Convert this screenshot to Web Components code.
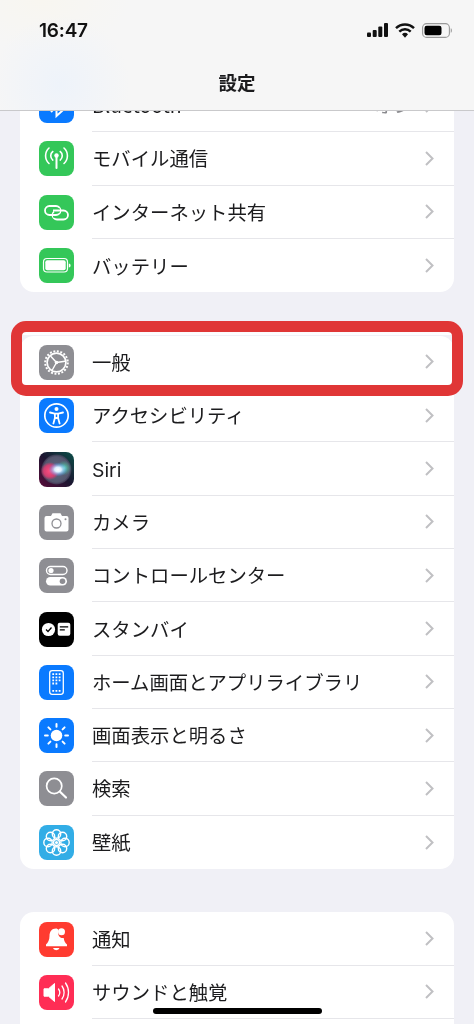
<!DOCTYPE html>
<html lang="ja">
<head>
<meta charset="utf-8">
<title>設定</title>
<style>
html,body{margin:0;padding:0;background:#f0f0f6;overflow:hidden;}
</style>
</head>
<body>
<settings-app>
  <status-bar slot="header"></status-bar>
  <nav-title slot="header">設定</nav-title>

  <settings-group class="first">
    <settings-row value="オン">Bluetooth
      <svg slot="icon" viewBox="0 0 35 35"><rect width="35" height="35" rx="8" fill="#0a7aff"/><path d="M12 11l11 12-5.500 5V7l5.500 5-11 12" fill="none" stroke="#fff" stroke-width="2"/></svg>
    </settings-row>
    <settings-row>モバイル通信
      <svg slot="icon" viewBox="0 0 35 35"><rect width="35" height="35" rx="8" fill="#34c759"/><g fill="none" stroke="#fff" stroke-width="1.600" stroke-linecap="round"><path d="M17.500 16v11" stroke-width="2"/><path d="M13.800 10.500a5.500 5.500 0 0 0 0 8.600M21.200 10.500a5.500 5.500 0 0 1 0 8.600"/><path d="M10 7a10.500 10.500 0 0 0 0 15.500M25 7a10.500 10.500 0 0 1 0 15.500"/></g><circle cx="17.500" cy="14.500" r="2.200" fill="#fff"/></svg>
    </settings-row>
    <settings-row>インターネット共有
      <svg slot="icon" viewBox="0 0 35 35"><rect width="35" height="35" rx="8" fill="#34c759"/><g fill="none" stroke-width="1.800"><rect x="13.500" y="15.500" width="15.500" height="9" rx="4.500" stroke="#fff"/><path d="M14 20.500h6" stroke="#34c759" stroke-width="3.800"/><rect x="6" y="11" width="15.500" height="9" rx="4.500" stroke="#fff"/><path d="M15 15.500h6" stroke="#34c759" stroke-width="3.800"/><path d="M14 15.500h8" stroke="#fff"/></g></svg>
    </settings-row>
    <settings-row last>バッテリー
      <svg slot="icon" viewBox="0 0 35 35"><rect width="35" height="35" rx="8" fill="#34c759"/><rect x="4.500" y="10.500" width="24" height="13.500" rx="3.500" fill="none" stroke="#fff" stroke-width="1.200"/><rect x="6.300" y="12.300" width="20.400" height="9.900" rx="2" fill="#fff"/><path d="M29.800 15.500c1.300.3 1.800 1 1.800 2s-.5 1.700-1.800 2z" fill="#fff"/></svg>
    </settings-row>
  </settings-group>

  <settings-group>
    <settings-row>一般
      <svg slot="icon" viewBox="0 0 35 35"><rect width="35" height="35" rx="8" fill="#8e8e93"/><g fill="none" stroke="#fff"><circle cx="17.500" cy="17.500" r="11.300" stroke-width="2" stroke-dasharray="1.970 1.580"/><circle cx="17.500" cy="17.500" r="9.400" stroke-width="1.700"/><path d="M17.500 17.500L11.500 11M17.500 17.500L26 16.300M17.500 17.500L13 25.500" stroke-width="1.400"/></g><circle cx="17.500" cy="17.500" r="1.800" fill="#fff"/></svg>
    </settings-row>
    <settings-row>アクセシビリティ
      <svg slot="icon" viewBox="0 0 35 35"><rect width="35" height="35" rx="8" fill="#0a7aff"/><circle cx="17.500" cy="17.500" r="11.700" fill="none" stroke="#fff" stroke-width="1.700"/><circle cx="17.500" cy="11" r="2" fill="#fff"/><path d="M11 14.500l4.700 1.100h3.600l4.700-1.100M15.900 15.700v4.300l-1.500 5.500M19.100 15.700v4.300l1.500 5.500M15.900 20h3.200" fill="none" stroke="#fff" stroke-width="1.800" stroke-linecap="round" stroke-linejoin="round"/></svg>
    </settings-row>
    <settings-row><span class="latin">Siri</span>
      <svg slot="icon" viewBox="0 0 35 35"><defs><linearGradient id="sb" x1="0" y1="1" x2="1" y2="0"><stop offset="0" stop-color="#5a0c3a"/><stop offset=".5" stop-color="#1b1530"/><stop offset="1" stop-color="#0b4f48"/></linearGradient><radialGradient id="so"><stop offset="0" stop-color="#5d6a80"/><stop offset=".85" stop-color="#55566e"/><stop offset="1" stop-color="#4a4660" stop-opacity=".6"/></radialGradient><radialGradient id="sr"><stop offset="0" stop-color="#ff4f80"/><stop offset=".65" stop-color="#e03c72" stop-opacity=".9"/><stop offset="1" stop-color="#d83a6e" stop-opacity="0"/></radialGradient><radialGradient id="sg"><stop offset="0" stop-color="#6ae6b8"/><stop offset="1" stop-color="#3dbb9a" stop-opacity="0"/></radialGradient><radialGradient id="sw"><stop offset="0" stop-color="#fff"/><stop offset=".35" stop-color="#dcefff"/><stop offset="1" stop-color="#3d8cff" stop-opacity="0"/></radialGradient></defs><rect width="35" height="35" rx="8" fill="url(#sb)"/><circle cx="17.500" cy="17.500" r="15" fill="url(#so)"/><ellipse cx="11" cy="19" rx="9.500" ry="9" fill="url(#sr)"/><ellipse cx="25" cy="16" rx="7.500" ry="7.500" fill="url(#sg)"/><ellipse cx="19" cy="17.500" rx="9.500" ry="7" fill="url(#sw)"/></svg>
    </settings-row>
    <settings-row>カメラ
      <svg slot="icon" viewBox="0 0 35 35"><rect width="35" height="35" rx="8" fill="#8e8e93"/><path d="M7.500 11h4.500l1.500-2.800h8L23 11h4.500a2 2 0 0 1 2 2v11.500a2 2 0 0 1-2 2h-20a2 2 0 0 1-2-2V13a2 2 0 0 1 2-2z" fill="#fff"/><circle cx="17.500" cy="18.500" r="4.500" fill="none" stroke="#8e8e93" stroke-width="1.300"/><circle cx="26.500" cy="14.300" r="1" fill="#8e8e93"/></svg>
    </settings-row>
    <settings-row>コントロールセンター
      <svg slot="icon" viewBox="0 0 35 35"><rect width="35" height="35" rx="8" fill="#8e8e93"/><rect x="7.500" y="8.500" width="20.500" height="8" rx="4" fill="none" stroke="#fff" stroke-width="1.400"/><circle cx="12" cy="12.500" r="2.600" fill="#fff"/><rect x="7" y="19" width="21" height="8.500" rx="4.250" fill="#fff"/><circle cx="23.500" cy="23.250" r="2.800" fill="#8e8e93"/></svg>
    </settings-row>
    <settings-row>スタンバイ
      <svg slot="icon" viewBox="0 0 35 35"><rect width="35" height="35" rx="8" fill="#000"/><circle cx="9.500" cy="17.500" r="6.600" fill="#fff"/><path d="M7 17.500l2 2 3.500-4" fill="none" stroke="#000" stroke-width="1.300"/><rect x="18.700" y="10.700" width="12.600" height="13" rx="2" fill="#fff"/><path d="M20.800 14.800h8.400M20.800 17.800h5" stroke="#000" stroke-width="1.200"/></svg>
    </settings-row>
    <settings-row>ホーム画面とアプリライブラリ
      <svg slot="icon" viewBox="0 0 35 35"><rect width="35" height="35" rx="8" fill="#0a7aff"/><rect x="10.700" y="5.700" width="13.600" height="23.600" rx="2.500" fill="none" stroke="#fff" stroke-width="1.300"/><g fill="#fff"><path d="M13.300 8.300h1.800v1.800h-1.800zM16.500 8.300h1.800v1.800h-1.800zM19.700 8.300h1.800v1.800h-1.800zM13.300 11.400h1.800v1.800h-1.800zM16.500 11.400h1.800v1.800h-1.800zM19.700 11.400h1.800v1.800h-1.800zM13.300 14.500h1.800v1.800h-1.800zM16.500 14.500h1.800v1.800h-1.800zM19.700 14.500h1.800v1.800h-1.800zM13.300 17.600h1.800v1.800h-1.800zM16.500 17.600h1.800v1.800h-1.800zM13.300 25h1.800v1.800h-1.800zM16.500 25h1.800v1.800h-1.800zM19.700 25h1.800v1.800h-1.800z"/></g></svg>
    </settings-row>
    <settings-row>画面表示と明るさ
      <svg slot="icon" viewBox="0 0 35 35"><rect width="35" height="35" rx="8" fill="#0a7aff"/><circle cx="17.500" cy="17.500" r="5.800" fill="#fff"/><g stroke="#fff" stroke-width="2" stroke-linecap="round"><path d="M17.500 6v2.800M17.500 26.200V29M6 17.500h2.800M26.200 17.500H29M9.400 9.400l2 2M23.600 23.600l2 2M9.400 25.600l2-2M23.600 11.400l2-2"/></g></svg>
    </settings-row>
    <settings-row>検索
      <svg slot="icon" viewBox="0 0 35 35"><rect width="35" height="35" rx="8" fill="#8e8e93"/><circle cx="15.200" cy="15" r="7.600" fill="none" stroke="#fff" stroke-width="1.700"/><path d="M21 20.700l6 5.800" stroke="#fff" stroke-width="2.200" stroke-linecap="round"/></svg>
    </settings-row>
    <settings-row last>壁紙
      <svg slot="icon" viewBox="0 0 35 35"><rect width="35" height="35" rx="8" fill="#32ade6"/><g fill="none" stroke="#fff" stroke-width="1.400"><circle cx="17.500" cy="9" r="4.200"/><circle cx="23.500" cy="11.500" r="4.200"/><circle cx="26" cy="17.500" r="4.200"/><circle cx="23.500" cy="23.500" r="4.200"/><circle cx="17.500" cy="26" r="4.200"/><circle cx="11.500" cy="23.500" r="4.200"/><circle cx="9" cy="17.500" r="4.200"/><circle cx="11.500" cy="11.500" r="4.200"/><circle cx="17.500" cy="17.500" r="3"/></g><circle cx="17.500" cy="17.500" r="1.500" fill="#fff"/></svg>
    </settings-row>
  </settings-group>

  <settings-group class="cut">
    <settings-row>通知
      <svg slot="icon" viewBox="0 0 35 35"><rect width="35" height="35" rx="8" fill="#ff3b30"/><path d="M17 6.500c-4.500 0-6.500 3.500-6.500 7.500 0 4-1.500 6.500-3.500 8.500v1.800h21v-1.800c-1.800-1.800-3-3.500-3.300-6.500-4 .5-6.700-3-5.200-8-.7-1-1.500-1.500-2.500-1.500z" fill="#fff"/><circle cx="22.500" cy="9.700" r="3.500" fill="#fff"/><path d="M14 26h6.500a3.300 2.600 0 0 1-6.500 0z" fill="#fff"/></svg>
    </settings-row>
    <settings-row>サウンドと触覚
      <svg slot="icon" viewBox="0 0 35 35"><rect width="35" height="35" rx="8" fill="#ff2d55"/><path d="M5 13.800h4.500l6-5.300v18l-6-5.300H5z" fill="#fff" stroke="#fff" stroke-linejoin="round"/><g fill="none" stroke="#fff" stroke-width="1.300" stroke-linecap="round"><path d="M19.500 14c1.500 2 1.500 5 0 7"/><path d="M23 11c2.800 3.800 2.800 9.200 0 13"/><path d="M26.500 8c4 5.500 4 13.500 0 19"/></g></svg>
    </settings-row>
  </settings-group>

  <red-highlight slot="overlay"></red-highlight>
  <home-indicator slot="overlay"></home-indicator>
</settings-app>

<script>
// page shell: header on top, clipped scrolling list under it, overlays last
class SettingsApp extends HTMLElement{
  constructor(){
    super();
    this.attachShadow({mode:'open'});
    this.shadowRoot.innerHTML=`
    <style>
    :host{display:block;position:relative;width:474px;height:1024px;overflow:hidden;background:#f0f0f6;
      font-family:"Noto Sans CJK JP","Liberation Sans",sans-serif;color:#1c1c1e;filter:blur(.4px);}
    header{height:110px;border-bottom:1px solid #c9c9cb;box-sizing:content-box;display:flex;flex-direction:column;
      background:radial-gradient(70px 70px at 60px 85px,#eef3fa,rgba(238,243,250,0)),radial-gradient(90px 50px at 40px 0,#f8f6f0,rgba(248,246,240,0)),#f6f6f6;}
    .list{height:913px;overflow:hidden;display:flex;flex-direction:column;gap:43.4px;}
    </style>
    <header><slot name="header"></slot></header>
    <div class="list"><slot></slot></div>
    <slot name="overlay"></slot>`;
  }
}

class StatusBar extends HTMLElement{
  constructor(){
    super();
    this.attachShadow({mode:'open'});
    this.shadowRoot.innerHTML=`
    <style>
    :host{display:flex;align-items:center;justify-content:space-between;height:60px;padding:0 22px 0 39px;box-sizing:border-box;}
    .time{font:600 19px/1 "Inter","Liberation Sans",sans-serif;color:#111;letter-spacing:-.2px;}
    .icons{display:flex;align-items:center;gap:7px;}
    svg{display:block;}
    </style>
    <span class="time">16:47</span>
    <div class="icons">
      <svg width="21" height="14" viewBox="0 0 21 14"><g fill="#111"><rect x="0" y="9.500" width="4" height="4.500" rx="1"/><rect x="5.700" y="7" width="4" height="7" rx="1"/><rect x="11.300" y="3.500" width="4" height="10.500" rx="1"/><rect x="17" y="0" width="4" height="14" rx="1"/></g></svg>
      <svg width="20" height="15" viewBox="0 0 20 15"><g fill="none" stroke="#111" stroke-width="2.400"><path d="M1 5.200a12.800 12.800 0 0 1 18 0"/><path d="M4.300 8.600a8.200 8.200 0 0 1 11.400 0"/></g><path d="M7 11.300a4.300 4.300 0 0 1 6 0L10 14.700z" fill="#111"/></svg>
      <svg width="30" height="15" viewBox="0 0 30 15"><rect x=".6" y=".6" width="26.800" height="13.800" rx="4" fill="none" stroke="#9a9a9a" stroke-width="1.100"/><rect x="2.500" y="2.700" width="17" height="9.600" rx="2.200" fill="#000"/><path d="M28.700 5.300c.9.300 1.300 1.100 1.300 2.200s-.4 1.900-1.300 2.200z" fill="#a5a5a5"/></svg>
    </div>`;
  }
}

class NavTitle extends HTMLElement{
  constructor(){
    super();
    this.attachShadow({mode:'open'});
    this.shadowRoot.innerHTML=`
    <style>
    :host{display:flex;flex:1;align-items:center;justify-content:center;padding-bottom:6px;box-sizing:border-box;
      font-size:18.500px;font-weight:700;color:#1c1c1e;}
    </style><slot></slot>`;
  }
}

class SettingsGroup extends HTMLElement{
  constructor(){
    super();
    this.attachShadow({mode:'open'});
    this.shadowRoot.innerHTML=`
    <style>
    :host{display:block;flex:none;margin:0 20px;background:#fff;border-radius:14px;overflow:hidden;}
    :host(.first){margin-top:-32px;}
    :host(.cut){padding-bottom:30px;}
    </style><slot></slot>`;
  }
}

class SettingsRow extends HTMLElement{
  constructor(){
    super();
    this.attachShadow({mode:'open'});
    this.shadowRoot.innerHTML=`
    <style>
    :host{display:flex;align-items:center;height:53.330px;padding-left:18.500px;box-sizing:border-box;}
    .icon{flex:none;width:35px;height:35px;margin-right:18.500px;}
    ::slotted(svg){display:block;width:35px;height:35px;}
    ::slotted(.latin){font-family:"Inter","Liberation Sans",sans-serif;}
    .body{flex:1;height:100%;display:flex;align-items:center;padding-right:20px;box-sizing:border-box;
      border-bottom:1.300px solid #e6e6ea;font-size:19.350px;color:#1c1c1e;white-space:nowrap;}
    :host([last]) .body{border-bottom:0;}
    .label{flex:1;}
    .value{color:#8a8a8e;margin-right:12px;}
    .chev{flex:none;display:block;}
    </style>
    <div class="icon"><slot name="icon"></slot></div>
    <div class="body">
      <span class="label"><slot></slot></span>
      <span class="value">${this.getAttribute('value')||''}</span>
      <svg class="chev" width="9" height="15" viewBox="0 0 9 15"><path d="M1 1l6.500 6.500L1 14" fill="none" stroke="#c0c0c3" stroke-width="2"/></svg>
    </div>`;
  }
}

// annotation drawn over the 一般 row, the strip above the card shows white in the shot
class RedHighlight extends HTMLElement{
  constructor(){
    super();
    this.attachShadow({mode:'open'});
    this.shadowRoot.innerHTML=`
    <style>
    :host{display:block;position:absolute;left:11px;top:321px;width:452px;height:75px;box-sizing:border-box;
      border:11.500px solid #e03636;border-radius:15px;
      background:linear-gradient(#fbfbfd,#fff) top left/100% 3px no-repeat;background-origin:padding-box;background-clip:padding-box;}
    </style>`;
  }
}

class HomeIndicator extends HTMLElement{
  constructor(){
    super();
    this.attachShadow({mode:'open'});
    this.shadowRoot.innerHTML=`
    <style>
    :host{display:block;position:absolute;left:153px;top:1008px;width:169px;height:6px;border-radius:3px;background:#000;}
    </style>`;
  }
}

customElements.define('settings-app',SettingsApp);
customElements.define('status-bar',StatusBar);
customElements.define('nav-title',NavTitle);
customElements.define('settings-group',SettingsGroup);
customElements.define('settings-row',SettingsRow);
customElements.define('red-highlight',RedHighlight);
customElements.define('home-indicator',HomeIndicator);
</script>
</body>
</html>
